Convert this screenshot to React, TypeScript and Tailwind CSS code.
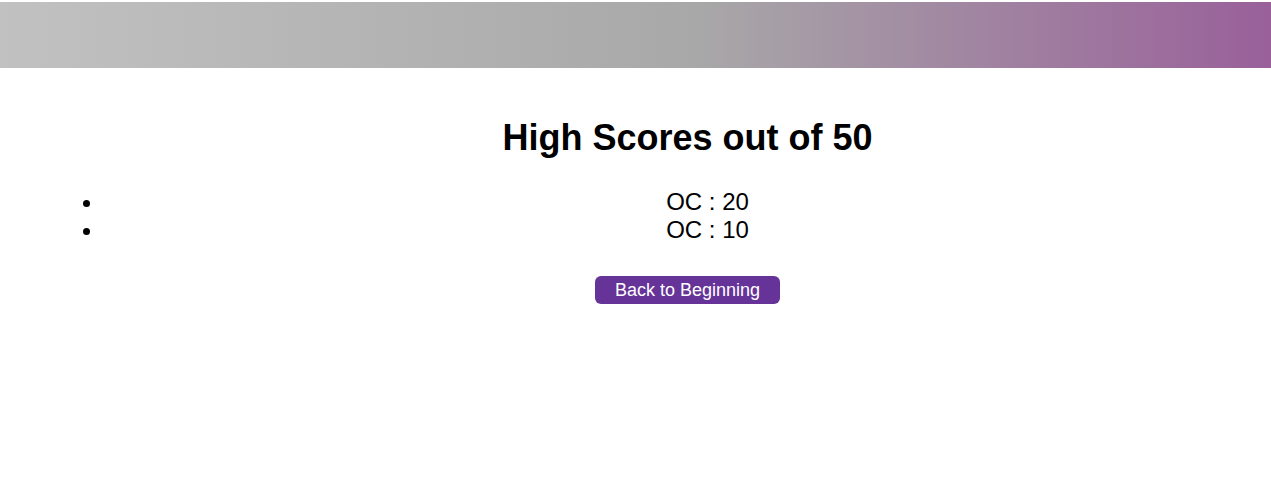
const scores = [
  { name: "OC", score: 20 },
  { name: "OC", score: 10 },
];

const App = () => {
  return (
    <div className="min-h-[484px] overflow-hidden bg-white font-['Liberation_Sans',Arial,sans-serif] text-black">
      {/* Header bar */}
      <header className="mt-[2px] h-[66px] w-full bg-[linear-gradient(to_right,#c1c1c1,#a8a8a8_55%,#99609a)]" />

      {/* Scores */}
      <main className="ml-[64px] w-[1247px] pt-[50px] text-center">
        <h1 className="text-[36px] font-bold leading-[40px]">High Scores out of 50</h1>
        <ul className="mt-[30px] list-disc pl-[40px] text-[24px] leading-[28px]">
          {scores.map((s, i) => (
            <li key={i}>
              {s.name} : {s.score}
            </li>
          ))}
        </ul>
        <button className="mt-[32px] h-[28px] rounded-[6px] bg-[#663399] px-[20px] text-[18px] leading-[28px] text-white">
          Back to Beginning
        </button>
      </main>
    </div>
  );
};

export default App;
